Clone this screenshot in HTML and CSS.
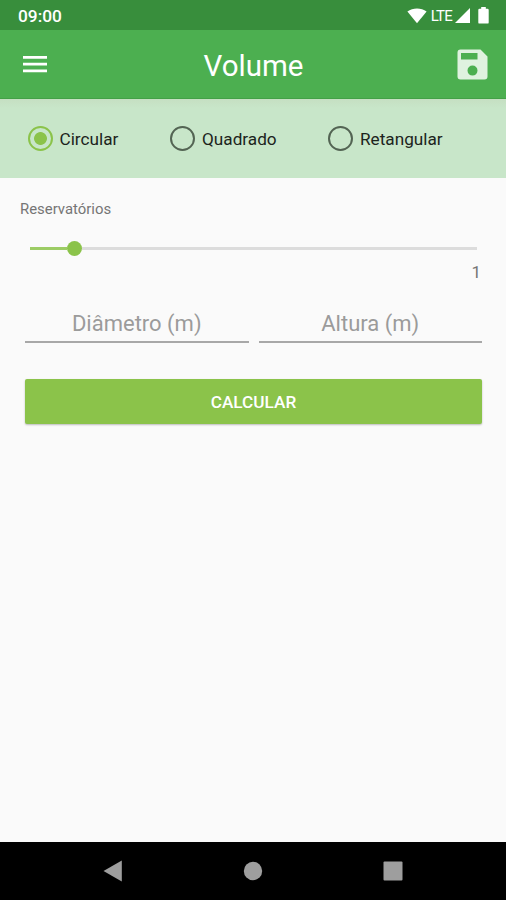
FILE: index.html
```
<!DOCTYPE html>
<html lang="pt-BR">
<head>
    <meta charset="UTF-8">
    <meta name="viewport" content="width=device-width, initial-scale=1.0">
    <title>Volume</title>
    <link rel="stylesheet" href="styles.css">
</head>
<body>
    <div class="status-bar">
        <span class="clock">09:00</span>
        <svg class="wifi" width="20" height="16" viewBox="0 0 20 16"><path d="M0.4 3.6C5.8-0.6 14.2-0.6 19.6 3.6L10 15.2Z"/></svg>
        <span class="network">LTE</span>
        <svg class="signal" width="15" height="15" viewBox="0 0 15 15"><path d="M15 0V15H0Z"/></svg>
        <svg class="battery" width="11" height="17" viewBox="0 0 11 17"><path d="M3.2 0H7.8V1.8H9.5Q10.7 1.8 10.7 3V15.4Q10.7 16.6 9.5 16.6H1.5Q0.3 16.6 0.3 15.4V3Q0.3 1.8 1.5 1.8H3.2Z"/></svg>
    </div>

    <header class="app-bar">
        <button class="icon-button" aria-label="Menu">
            <svg width="24" height="18" viewBox="0 0 24 18"><path d="M0 1H24V3.8H0ZM0 7.7H24V10.5H0ZM0 14.4H24V17.2H0Z"/></svg>
        </button>
        <h1>Volume</h1>
        <button class="icon-button save" aria-label="Salvar">
            <svg width="31" height="31" viewBox="0 0 31 31"><path fill-rule="evenodd" d="M3.5 0.5H23.5L30.5 7.5V27.5Q30.5 30.5 27.5 30.5H3.5Q0.5 30.5 0.5 27.5V3.5Q0.5 0.5 3.5 0.5ZM4 4V10.4H20.5V4ZM15.5 16.6A5 5 0 1 0 15.5 26.6A5 5 0 1 0 15.5 16.6Z"/></svg>
        </button>
    </header>

    <div class="shape-options">
        <label class="option">
            <input type="radio" name="shape" checked>
            <span>Circular</span>
        </label>
        <label class="option">
            <input type="radio" name="shape">
            <span>Quadrado</span>
        </label>
        <label class="option">
            <input type="radio" name="shape">
            <span>Retangular</span>
        </label>
    </div>

    <main class="content">
        <p class="slider-label">Reservatórios</p>
        <div class="slider">
            <div class="slider-fill"></div>
            <div class="slider-thumb"></div>
            <div class="slider-track"></div>
        </div>
        <p class="slider-value">1</p>

        <div class="fields">
            <input type="text" placeholder="Diâmetro (m)">
            <input type="text" placeholder="Altura (m)">
        </div>

        <button class="calculate">CALCULAR</button>
    </main>

    <nav class="nav-bar">
        <svg width="20" height="22" viewBox="0 0 20 22"><path d="M0.5 11L18.8 0.5V21.5Z"/></svg>
        <svg width="20" height="20" viewBox="0 0 20 20"><circle cx="10" cy="10" r="9.2"/></svg>
        <svg width="20" height="20" viewBox="0 0 20 20"><rect x="0.5" y="0.5" width="19" height="19" rx="1"/></svg>
    </nav>
</body>
</html>
```
FILE: styles.css
```
:root {
    --primary-color: #4caf50;
    --primary-dark: #388e3c;
    --primary-light: #c8e6c9;
    --accent-color: #8bc34a;
    --background-color: #fafafa;
}

* {
    margin: 0;
    padding: 0;
    box-sizing: border-box;
}

body {
    display: flex;
    flex-direction: column;
    height: 100vh;
    font-family: Roboto, "Liberation Sans", sans-serif;
    background-color: var(--background-color);
    overflow: hidden;
}

svg {
    display: block;
    fill: currentColor;
}

button {
    border: none;
    background: none;
    color: inherit;
    font-family: inherit;
    cursor: pointer;
}

.status-bar {
    display: flex;
    align-items: center;
    height: 30px;
    padding: 1px 17px 0 18px;
    background-color: var(--primary-dark);
    color: white;
}

.clock {
    flex: 1;
    font-size: 17.3px;
    font-weight: 500;
}

.network {
    margin: 0 3px 0 4px;
    font-size: 15px;
    letter-spacing: -0.8px;
}

.battery {
    margin-left: 8px;
}

.app-bar {
    display: flex;
    align-items: center;
    justify-content: space-between;
    height: 69px;
    padding: 0 18px 0 23px;
    background-color: var(--primary-color);
    border-bottom: 1px solid #43a047;
    color: white;
}

.app-bar h1 {
    padding: 3px 0 0 3px;
    font-size: 29.5px;
    font-weight: 400;
    line-height: 34px;
}

.app-bar .save {
    color: #dff2df;
}

.shape-options {
    display: flex;
    align-items: center;
    height: 79px;
    padding-left: 27.5px;
    background: linear-gradient(#c5dfc2, var(--primary-light) 9px);
}

.option {
    display: flex;
    align-items: center;
    gap: 7px;
    font-size: 17.2px;
    color: #1c241c;
}

.option:nth-child(1) {
    width: 142.5px;
}

.option:nth-child(2) {
    width: 158px;
}

.option input {
    appearance: none;
    width: 25px;
    height: 25px;
    border: 2.5px solid #536453;
    border-radius: 50%;
}

.option input:checked {
    border-color: var(--accent-color);
    background: radial-gradient(circle, var(--accent-color) 6px, transparent 6.8px);
}

.content {
    flex: 1;
    padding: 21px 24px 0 25px;
}

.slider-label {
    margin-left: -5px;
    font-size: 14.9px;
    line-height: 20px;
    color: #757575;
}

.slider {
    display: flex;
    align-items: center;
    height: 15px;
    margin: 22px 5px 0 5px;
}

.slider-fill {
    width: 37px;
    height: 3px;
    background-color: #9ccc65;
}

.slider-thumb {
    width: 15px;
    height: 15px;
    border-radius: 50%;
    background-color: var(--accent-color);
}

.slider-track {
    flex: 1;
    height: 3px;
    background-color: #dcdcdc;
}

.slider-value {
    margin-top: 6px;
    padding-right: 1px;
    font-size: 17px;
    line-height: 20px;
    text-align: right;
    color: #757575;
}

.fields {
    display: flex;
    gap: 10px;
    margin-top: 22px;
}

.fields input {
    flex: 1;
    min-width: 0;
    height: 39px;
    padding-top: 1px;
    border: none;
    border-bottom: 2px solid #a8a8a8;
    background: none;
    font-family: inherit;
    font-size: 22px;
    text-align: center;
}

.fields input::placeholder {
    color: #9b9b9b;
}

.calculate {
    display: block;
    width: 100%;
    height: 45px;
    margin-top: 36px;
    border-radius: 2px;
    background-color: var(--accent-color);
    box-shadow: 0 1px 2px rgba(0, 0, 0, 0.25);
    font-size: 17.2px;
    font-weight: 500;
}

.content .calculate {
    color: white;
}

.nav-bar {
    display: flex;
    align-items: center;
    justify-content: space-between;
    height: 58px;
    padding: 0 103px 0 103px;
    background-color: black;
    color: #9e9e9e;
}
```
